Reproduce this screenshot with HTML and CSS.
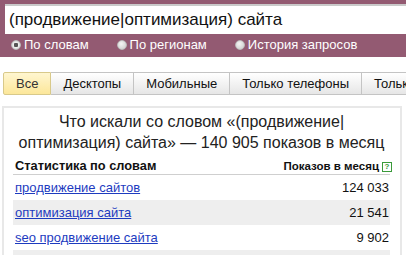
FILE: index.html
```html
<!DOCTYPE html>
<html>
<head>
<meta charset="utf-8">
<link rel="stylesheet" href="styles.css">
</head>
<body>
<div class="head">
  <div class="search">(продвижение|оптимизация) сайта</div>
  <div class="radios">
    <span class="radio on"><i></i>По словам</span>
    <span class="radio"><i></i>По регионам</span>
    <span class="radio"><i></i>История запросов</span>
  </div>
</div>
<div class="tabs">
  <span class="tab active">Все</span>
  <span class="tab">Десктопы</span>
  <span class="tab">Мобильные</span>
  <span class="tab">Только телефоны</span>
  <span class="tab">Только планшеты</span>
</div>
<div class="box">
  <div class="title">Что искали со словом «(продвижение|<br>оптимизация) сайта» — 140&nbsp;905 показов в месяц</div>
  <div class="thead"><span class="l">Статистика по словам</span><span class="r">Показов в месяц<b class="q">?</b></span></div>
  <div class="row"><a href="#">продвижение сайтов</a><span>124 033</span></div>
  <div class="row alt"><a href="#">оптимизация сайта</a><span>21 541</span></div>
  <div class="row"><a href="#">seo продвижение сайта</a><span>9 902</span></div>
  <div class="row alt"><span></span></div>
</div>
</body>
</html>
```
FILE: styles.css
```css
html, body { margin: 0; padding: 0; background: #fff; overflow: hidden; }
body { font-family: "Liberation Sans", Arial, sans-serif; width: 406px; height: 255px; }
.head { background: #935a72; padding: 4px 0 4px 5px; height: 49px; }
.search { background: #fff; border-top: 2px solid #c9c9c9; height: 30px; box-sizing: border-box; font-size: 17px; line-height: 27px; padding-left: 4px; color: #111; white-space: nowrap; }
.radios { display: flex; padding-left: 6px; margin-top: 3px; font-size: 13px; color: #fff; line-height: 16px; }
.radio { display: flex; align-items: center; margin-right: 28px; }
.radio i { width: 10px; height: 10px; border-radius: 50%; background: radial-gradient(circle at 40% 35%, #f4f4f4, #c8c8c8); margin-right: 3px; box-sizing: border-box; border: 1px solid #bbb; }
.radio.on i { background: radial-gradient(circle, #555 0 2px, #eee 2.5px, #ccc); }
.tabs { display: flex; margin: 15px 0 0 3px; white-space: nowrap; height: 23px; overflow: hidden; }
.tab { font-size: 13px; color: #111; padding: 0 12px; line-height: 21px; border: 1px solid #c4c4c4; border-left: none; background: linear-gradient(#fff, #e6e6e6); flex: none; }
.tab:first-child { border-left: 1px solid #c4c4c4; border-radius: 2px 0 0 2px; }
.tab.active { background: linear-gradient(#fff6d0, #fce79a); border-color: #d8c98a; color: #333; }
.box { margin: 11px 4px 0 2px; border: 2px solid #e8e8e8; border-bottom: none; padding: 3px 10px 0 9px; height: 200px; }
.title { text-align: center; font-size: 16px; line-height: 21px; color: #222; }
.thead { display: flex; justify-content: space-between; align-items: baseline; font-weight: bold; color: #111; margin-top: 6px; padding: 0 0 1px 2px; border-bottom: 1px solid #cfcfcf; line-height: 14px; }
.thead .l { font-size: 12.8px; }
.thead .r { font-size: 11.5px; margin-right: -2px; }
.q { display: inline-block; width: 8px; height: 8px; border: 1px solid #3a9a3a; color: #3a9a3a; font-size: 8px; line-height: 8px; text-align: center; margin-left: 3px; vertical-align: 1px; font-weight: bold; }
.row { display: flex; justify-content: space-between; height: 25px; align-items: center; font-size: 13px; padding: 0 1px 0 2px; }
.row.alt { background: #eeeeee; }
.row a { color: #1d3bbf; text-decoration: underline; }
.row span { color: #111; }
```
